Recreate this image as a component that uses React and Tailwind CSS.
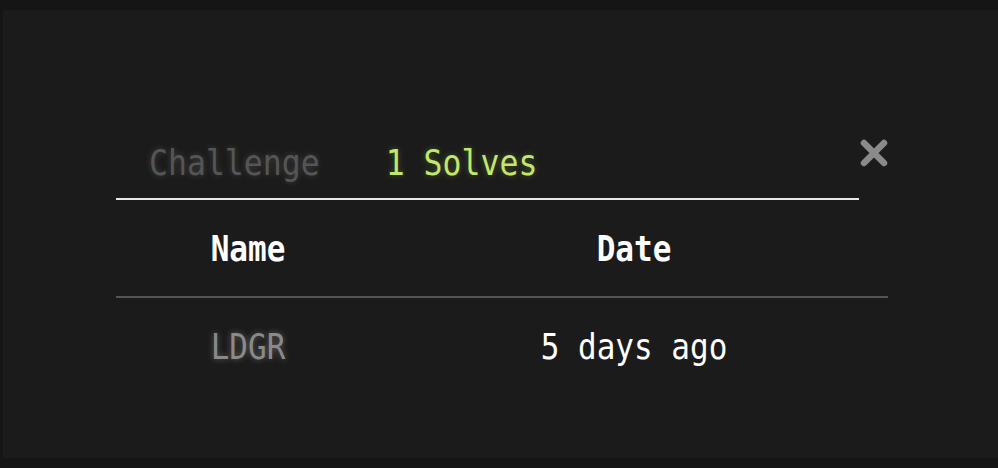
import React from 'react'

const mono = { fontFamily: '"DejaVu Sans Mono", "Liberation Mono", monospace' }

function CloseIcon() {
  return (
    <svg width="28" height="30" viewBox="0 0 28 30">
      <path d="M4 5 L24 25 M24 5 L4 25" stroke="#8a8a8a" strokeWidth="6.5" strokeLinecap="round" />
    </svg>
  )
}

// the reference face is a tall, narrow mono; stretch DejaVu a little vertically
function Tall({ children, className = '' }) {
  return <span className={`inline-block scale-y-[1.15] ${className}`}>{children}</span>
}

export default function App() {
  const solves = [{ name: 'LDGR', date: '5 days ago' }]

  return (
    <div className="h-[468px] w-[998px] overflow-hidden bg-[#151515] pt-[10px] pl-[3px]" style={mono}>
      <div className="h-[448px] bg-[#1b1b1b] pl-[113px] pt-[107px]">
        <div className="flex w-[772px] items-start">
          <div className="flex h-[83px] w-[743px] items-center border-b-2 border-[#e8e8e8] pt-[12px] pb-[2px]">
            <Tall className="px-[33px] text-[31.5px] leading-none text-[#555] [text-shadow:0_0_6px_rgba(255,255,255,0.18)]">
              Challenge
            </Tall>
            <Tall className="px-[33px] text-[31.5px] leading-none text-[#c2e86a] [text-shadow:0_0_6px_rgba(194,232,106,0.3)]">
              1 Solves
            </Tall>
          </div>
          <button className="mt-[21px] ml-[1px] flex h-[30px] w-[28px] items-center justify-center">
            <CloseIcon />
          </button>
        </div>

        <table className="w-[772px] text-center text-[31px]">
          <thead>
            <tr className="h-[97px] border-b-2 border-[#555]">
              <th className="w-[264px] font-bold text-white"><Tall>Name</Tall></th>
              <th className="w-[508px] font-bold text-white"><Tall>Date</Tall></th>
            </tr>
          </thead>
          <tbody>
            {solves.map((solve) => (
              <tr key={solve.name} className="h-[98px]">
                <td className="text-[#8a8a8a] [text-shadow:0_0_6px_rgba(255,255,255,0.3)]"><Tall>{solve.name}</Tall></td>
                <td className="text-white"><Tall>{solve.date}</Tall></td>
              </tr>
            ))}
          </tbody>
        </table>
      </div>
    </div>
  )
}
